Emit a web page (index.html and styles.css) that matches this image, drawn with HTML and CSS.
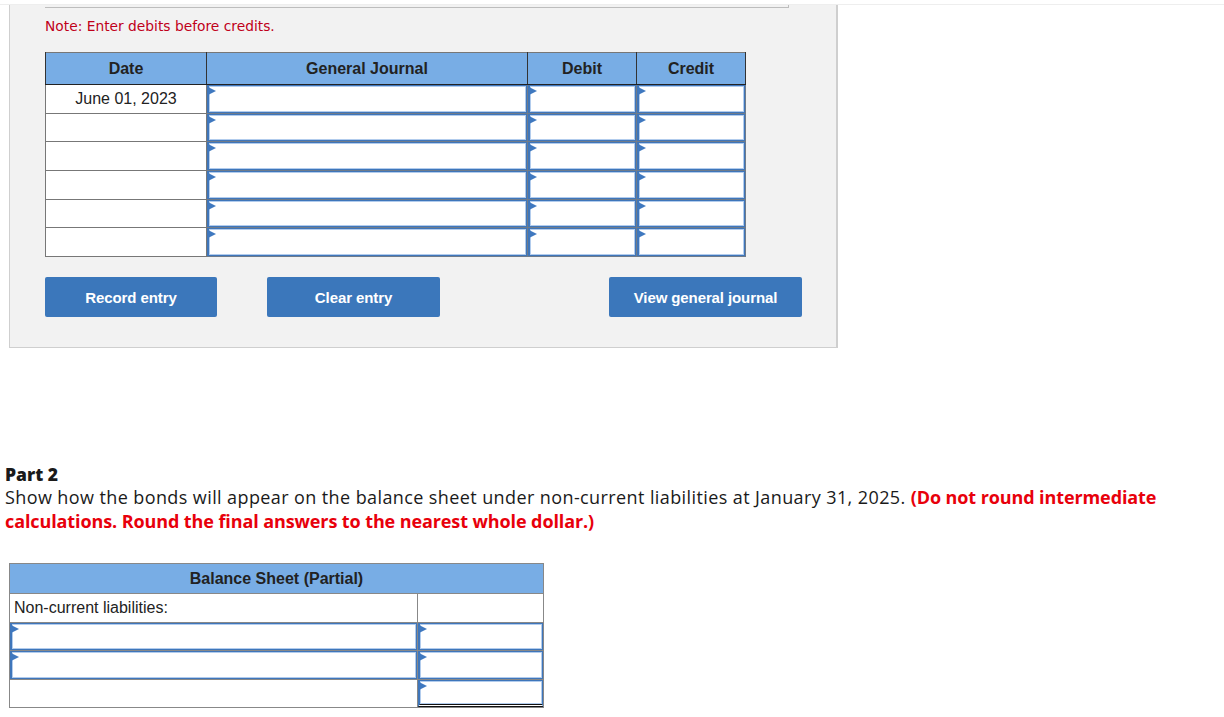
FILE: index.html
```html
<!DOCTYPE html>
<html>
<head>
<meta charset="utf-8">
<link rel="stylesheet" href="styles.css">
</head>
<body>
<div class="topline"></div>
<div class="panel">
  <div class="prevbox"></div>
  <p class="note">Note: Enter debits before credits.</p>
  <table class="journal">
    <colgroup>
      <col class="c-date"><col class="c-gj"><col class="c-dr"><col class="c-cr">
    </colgroup>
    <thead>
      <tr><th>Date</th><th>General Journal</th><th>Debit</th><th>Credit</th></tr>
    </thead>
    <tbody>
      <tr><td class="date">June 01, 2023</td><td class="in"><div class="inp"></div></td><td class="in"><div class="inp"></div></td><td class="in"><div class="inp"></div></td></tr>
      <tr><td class="date"></td><td class="in"><div class="inp"></div></td><td class="in"><div class="inp"></div></td><td class="in"><div class="inp"></div></td></tr>
      <tr><td class="date"></td><td class="in"><div class="inp"></div></td><td class="in"><div class="inp"></div></td><td class="in"><div class="inp"></div></td></tr>
      <tr><td class="date"></td><td class="in"><div class="inp"></div></td><td class="in"><div class="inp"></div></td><td class="in"><div class="inp"></div></td></tr>
      <tr><td class="date"></td><td class="in"><div class="inp"></div></td><td class="in"><div class="inp"></div></td><td class="in"><div class="inp"></div></td></tr>
      <tr><td class="date"></td><td class="in"><div class="inp"></div></td><td class="in"><div class="inp"></div></td><td class="in"><div class="inp"></div></td></tr>
    </tbody>
  </table>
  <div class="buttons">
    <button class="btn btn-record">Record entry</button>
    <button class="btn btn-clear">Clear entry</button>
    <button class="btn btn-view">View general journal</button>
  </div>
</div>

<div class="part2">
  <h3 class="part-title">Part 2</h3>
  <p class="question">Show how the bonds will appear on the balance sheet under non-current liabilities at January 31, 2025. <strong class="warn">(Do not round intermediate calculations. Round the final answers to the nearest whole dollar.)</strong></p>
</div>

<table class="bs">
  <colgroup><col class="c-label"><col class="c-amt"></colgroup>
  <thead><tr><th colspan="2">Balance Sheet (Partial)</th></tr></thead>
  <tbody>
    <tr><td class="label">Non-current liabilities:</td><td class="plain"></td></tr>
    <tr><td class="in"><div class="inp"></div></td><td class="in"><div class="inp"></div></td></tr>
    <tr><td class="in"><div class="inp"></div></td><td class="in"><div class="inp"></div></td></tr>
    <tr><td class="plain"></td><td class="in total"><div class="inp"></div></td></tr>
  </tbody>
</table>
</body>
</html>
```
FILE: styles.css
```css
html, body {
  margin: 0;
  padding: 0;
  background: #fff;
}
body {
  font-family: "Liberation Sans", Arial, sans-serif;
  color: #222;
}
.topline {
  height: 4px;
  border-bottom: 1px solid #eeeeee;
}
.panel {
  margin-left: 9px;
  background: #f2f2f2;
  border-left: 1px solid #cfcfcf;
  border-right: 2px solid #cfcfcf;
  border-bottom: 1px solid #cfcfcf;
  padding: 0 0 30px 35px;
  box-sizing: border-box;
  width: 829px;
}
.prevbox {
  width: 743px;
  height: 2px;
  border-bottom: 1px solid #bdbdbd;
  border-right: 1px solid #bdbdbd;
  box-sizing: content-box;
}
.note {
  margin: 0;
  padding-top: 10px;
  font-family: "DejaVu Sans", Verdana, sans-serif;
  font-size: 13.8px;
  line-height: 16px;
  color: #c0001a;
}
.journal {
  margin-top: 18px;
  border-collapse: collapse;
  table-layout: fixed;
  width: 700px;
  border: 1px solid #777;
}
.c-date { width: 161px; }
.c-gj { width: 321px; }
.c-dr { width: 109px; }
.c-cr { width: 109px; }
.journal th, .bs th {
  background: #78ade5;
  font-size: 16px;
  font-weight: bold;
  color: #222;
  text-align: center;
  padding: 0;
}
.journal th {
  height: 31px;
  border-left: 1px solid #333;
  border-right: 1px solid #333;
  border-bottom: 1px solid #222;
}
.journal tbody tr {
  height: 28.7px;
}
.journal td {
  padding: 0;
  background: #fff;
  border: 1px solid #777;
}
.journal td.date {
  text-align: center;
  font-size: 16px;
  color: #222;
  vertical-align: middle;
}
td.in {
  position: relative;
  border: 1px solid #6f7b8a;
}
.inp {
  position: absolute;
  top: 0;
  left: 0;
  right: 0;
  bottom: 0;
  border: 1px solid #3f76ba;
  border-left-width: 2px;
  box-shadow: inset 0 0 0 1px #b2cced;
  background: #fff;
}
.inp::before {
  content: "";
  position: absolute;
  top: 1px;
  left: -1px;
  width: 0;
  height: 0;
  border-left: 8px solid #3f78bf;
  border-top: 4px solid transparent;
  border-bottom: 4px solid transparent;
}
.buttons {
  display: flex;
  margin-top: 20px;
}
.btn {
  height: 40px;
  border: none;
  border-radius: 2px;
  background: #3b77bb;
  color: #fff;
  font-family: "Liberation Sans", Arial, sans-serif;
  font-size: 15px;
  font-weight: bold;
  letter-spacing: -0.1px;
  padding: 0;
}
.btn-record { width: 172px; }
.btn-clear { width: 173px; margin-left: 50px; }
.btn-view { width: 193px; margin-left: 169px; }

.part2 {
  margin-top: 115px;
  padding-left: 5px;
  font-family: "Open Sans", Lato, sans-serif;
  color: #1a1a1a;
}
.part-title {
  margin: 0;
  font-size: 17.5px;
  line-height: 22px;
  font-weight: 800;
}
.question {
  margin: 0;
  font-size: 18px;
  line-height: 24px;
  letter-spacing: 0.4px;
}
.warn {
  color: #e8000b;
  font-weight: 700;
  letter-spacing: -0.1px;
}
.bs {
  margin-top: 30px;
  margin-left: 9px;
  border-collapse: collapse;
  table-layout: fixed;
  width: 534px;
  border: 1px solid #888;
}
.c-label { width: 408px; }
.c-amt { width: 126px; }
.bs th {
  height: 29px;
  border-bottom: 1px solid #888;
}
.bs tbody tr {
  height: 28.5px;
}
.bs td {
  padding: 0;
  background: #fff;
  border: 1px solid #888;
}
.bs td.label {
  font-size: 16px;
  color: #222;
  padding-left: 4px;
}
.bs td.total .inp {
  border-bottom: 3px double #111;
}
```
